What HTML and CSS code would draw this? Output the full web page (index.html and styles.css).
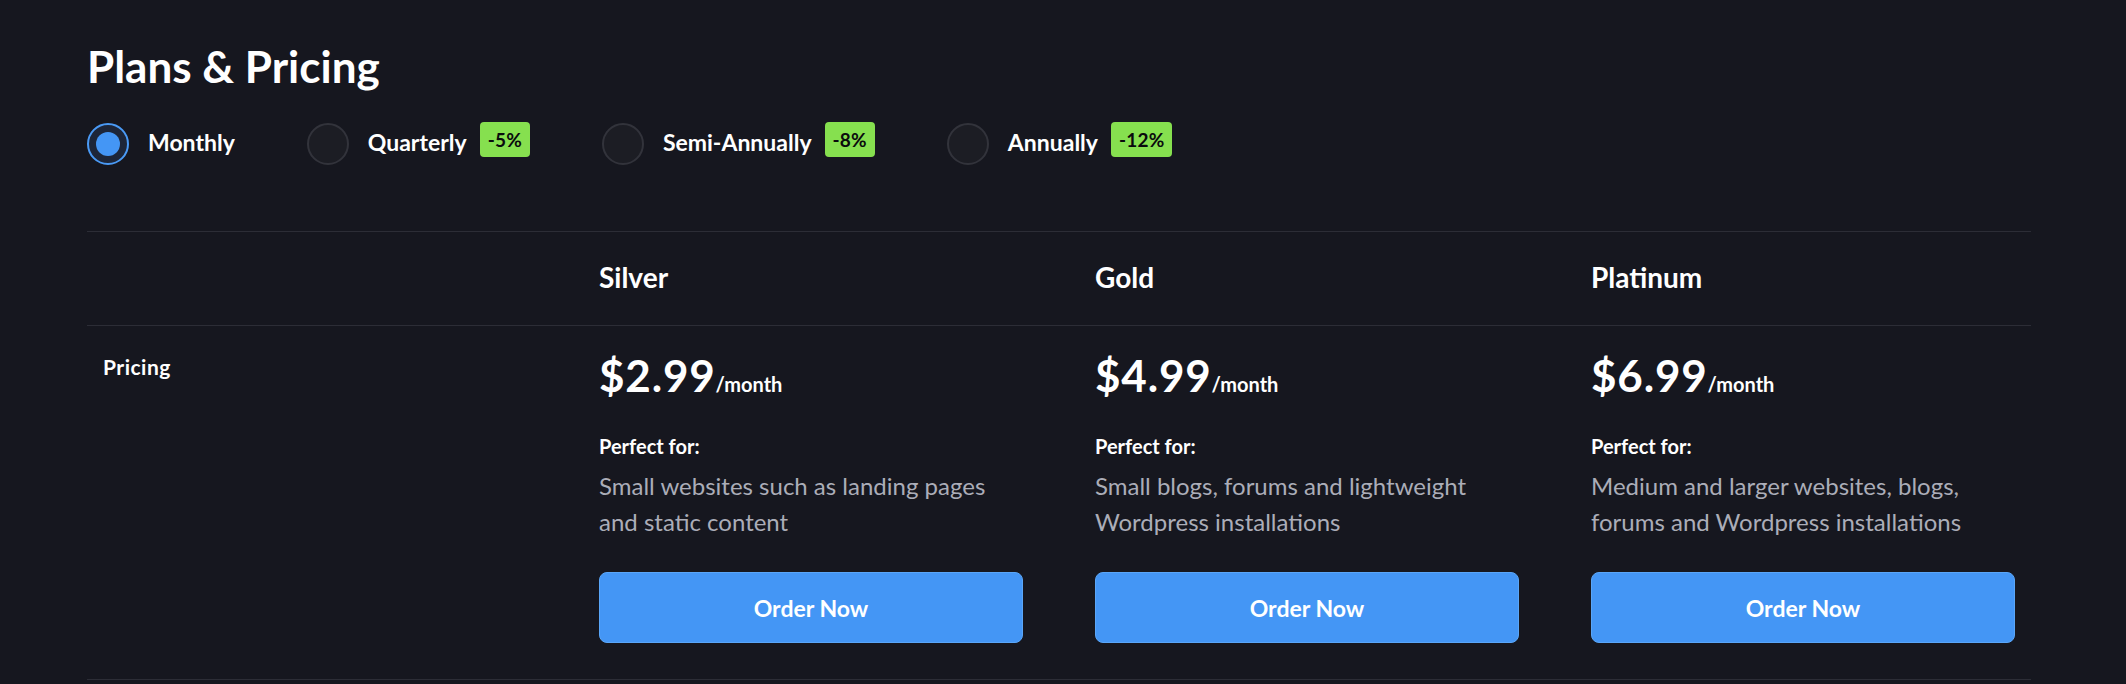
FILE: index.html
```html
<!DOCTYPE html>
<html lang="en">
<head>
<meta charset="utf-8">
<title>Plans &amp; Pricing</title>
<link rel="stylesheet" href="styles.css">
</head>
<body>
<main class="page">
  <h1 class="title">Plans &amp; Pricing</h1>
  <div class="periods">
    <label class="period">
      <span class="radio active"><span class="dot"></span></span>
      <span class="period-name">Monthly</span>
    </label>
    <label class="period">
      <span class="radio"></span>
      <span class="period-name">Quarterly</span>
      <span class="badge">-5%</span>
    </label>
    <label class="period">
      <span class="radio"></span>
      <span class="period-name">Semi-Annually</span>
      <span class="badge">-8%</span>
    </label>
    <label class="period">
      <span class="radio"></span>
      <span class="period-name">Annually</span>
      <span class="badge">-12%</span>
    </label>
  </div>

  <section class="table">
    <div class="row head">
      <div class="cell"></div>
      <div class="cell plan-name">Silver</div>
      <div class="cell plan-name">Gold</div>
      <div class="cell plan-name">Platinum</div>
    </div>
    <div class="row body">
      <div class="cell row-label">Pricing</div>
      <div class="cell plan">
        <div class="price"><span class="amount">$2.99</span><span class="per">/month</span></div>
        <div class="perfect">Perfect for:</div>
        <p class="desc">Small websites such as landing pages and static content</p>
        <button class="order">Order Now</button>
      </div>
      <div class="cell plan">
        <div class="price"><span class="amount">$4.99</span><span class="per">/month</span></div>
        <div class="perfect">Perfect for:</div>
        <p class="desc">Small blogs, forums and lightweight Wordpress installations</p>
        <button class="order">Order Now</button>
      </div>
      <div class="cell plan">
        <div class="price"><span class="amount">$6.99</span><span class="per">/month</span></div>
        <div class="perfect">Perfect for:</div>
        <p class="desc">Medium and larger websites, blogs, forums and Wordpress installations</p>
        <button class="order">Order Now</button>
      </div>
    </div>
  </section>
</main>
</body>
</html>
```
FILE: styles.css
```css
* { box-sizing: border-box; }

html, body {
  margin: 0;
  padding: 0;
  background: #16171f;
  color: #ffffff;
  font-family: "Lato", "Liberation Sans", sans-serif;
}

.page {
  padding: 40px 95px 0 87px;
}

.title {
  margin: 0;
  font-size: 44px;
  line-height: 52px;
  font-weight: 700;
}

.periods {
  display: flex;
  align-items: center;
  gap: 72px;
  margin-top: 31px;
  height: 42px;
}

.period {
  display: flex;
  align-items: center;
  height: 42px;
}

.radio {
  width: 42px;
  height: 42px;
  border-radius: 50%;
  border: 2px solid #32333b;
  background: #1c1d24;
  display: flex;
  align-items: center;
  justify-content: center;
  flex: none;
}

.radio.active {
  border-color: #4a9af5;
  background: #1d2639;
}

.dot {
  width: 24px;
  height: 24px;
  border-radius: 50%;
  background: #4496f5;
}

.period-name {
  margin-left: 19px;
  font-size: 23px;
  line-height: 28px;
  font-weight: 700;
  padding-bottom: 4px;
}

.badge {
  align-self: flex-start;
  margin-top: -1px;
  margin-left: 13px;
  height: 35px;
  min-width: 50px;
  padding: 0 8px;
  border-radius: 4px;
  background: #86e04f;
  color: #0a0b0d;
  font-size: 19px;
  letter-spacing: 0.2px;
  font-weight: 700;
  display: flex;
  align-items: center;
  justify-content: center;
}

.table {
  margin-top: 66px;
  border-top: 1px solid #2c2d36;
}

.row {
  display: grid;
  grid-template-columns: repeat(4, 1fr);
  column-gap: 40px;
  border-bottom: 1px solid #2c2d36;
}

.cell {
  padding: 0 16px;
}

.head .cell {
  padding-top: 28px;
  padding-bottom: 31px;
  min-height: 93px;
}

.plan-name {
  font-size: 28px;
  line-height: 34px;
  font-weight: 700;
}

.row-label {
  padding-top: 29px;
  font-size: 21px;
  line-height: 24px;
  letter-spacing: 0.5px;
  font-weight: 700;
}

.plan {
  padding-top: 24px;
  padding-bottom: 36px;
}

.price {
  font-size: 44px;
  line-height: 50px;
  font-weight: 700;
}

.amount {
  letter-spacing: 0.8px;
}

.per {
  font-size: 20px;
  line-height: 20px;
}

.perfect {
  margin-top: 34px;
  font-size: 20px;
  line-height: 24px;
  font-weight: 700;
}

.desc {
  margin: 10px 0 0;
  font-size: 24px;
  line-height: 36px;
  color: #abadb8;
  max-width: 410px;
}

.order {
  display: block;
  margin-top: 32px;
  width: 424px;
  height: 71px;
  border: 1px solid #5aa6f8;
  border-radius: 8px;
  background: #4496f5;
  color: #ffffff;
  font-family: inherit;
  font-size: 23px;
  font-weight: 700;
  cursor: pointer;
}
```
